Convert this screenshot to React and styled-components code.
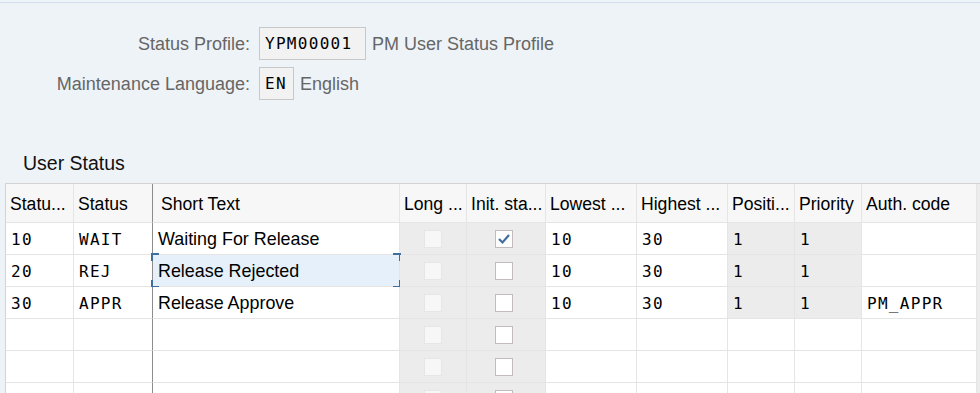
import React from 'react';
import styled, { createGlobalStyle } from 'styled-components';

const GlobalStyle = createGlobalStyle`
  html, body {
    margin: 0;
    padding: 0;
    background: #eef3f8;
    overflow: hidden;
  }
  body {
    font-family: "Liberation Sans", Arial, sans-serif;
  }
`;

const Page = styled.div`
  margin-top: 2px;
  border-top: 1px solid #d3dfed;
  height: 390px;
  background: #eef3f8;
`;

const Form = styled.div`
  display: grid;
  grid-template-columns: 250px auto;
  column-gap: 9px;
  row-gap: 7px;
  padding-top: 24px;
  align-items: center;
`;

const Label = styled.div`
  justify-self: end;
  color: #666;
  font-size: 18px;
  padding-top: 1px;
`;

const Field = styled.div`
  display: flex;
  align-items: center;
  gap: 6px;
`;

const Input = styled.div`
  box-sizing: border-box;
  width: ${({ $w }) => $w}px;
  height: 33px;
  padding-left: 5px;
  display: flex;
  align-items: center;
  background: #f2f2f2;
  border: 1px solid #c8c8c8;
  color: #000;
  font-family: "DejaVu Sans Mono", "Liberation Mono", monospace;
  font-size: 16px;
  letter-spacing: 1.3px;
`;

const Desc = styled.span`
  color: #666;
  font-size: 18px;
  padding-top: 1px;
`;

const Title = styled.h2`
  margin: 51px 0 0 23px;
  font-size: 19.5px;
  font-weight: normal;
  color: #111;
  line-height: 24px;
`;

const TableWrap = styled.div`
  display: flex;
  margin: 8px 0 0 5px;
`;

const Table = styled.div`
  display: grid;
  grid-template-columns: 68px 79px 247px 67px 79px 91px 91px 67px 67px 115px;
  border-left: 1px solid #cfd4da;
  border-top: 1px solid #d2d2d2;
  background: #fff;
`;

const Strip = styled.div`
  width: 4px;
  background: #ececec;
  border-top: 1px solid #d2d2d2;
`;

const HeadCell = styled.div`
  box-sizing: border-box;
  height: 39px;
  display: flex;
  align-items: center;
  padding-left: ${({ $pad }) => $pad ?? 4}px;
  padding-top: 2px;
  background: #f7f7f7;
  border-right: 1px solid ${({ $fixed }) => ($fixed ? '#8c8c8c' : '#e5e5e5')};
  border-bottom: 1px solid #e5e5e5;
  font-size: 17.6px;
  color: #000;
  white-space: nowrap;
  overflow: hidden;
`;

const Cell = styled.div`
  position: relative;
  box-sizing: border-box;
  height: 32px;
  display: flex;
  align-items: center;
  justify-content: ${({ $center }) => ($center ? 'center' : 'flex-start')};
  padding-left: ${({ $center }) => ($center ? 0 : 5)}px;
  padding-top: 1px;
  background: ${({ $bg }) => $bg || '#fff'};
  border-right: 1px solid ${({ $fixed }) => ($fixed ? '#8c8c8c' : '#e5e5e5')};
  border-bottom: 1px solid #e5e5e5;
  color: #000;
  white-space: nowrap;
  font-family: ${({ $mono }) =>
    $mono ? '"DejaVu Sans Mono", "Liberation Mono", monospace' : '"Liberation Sans", Arial, sans-serif'};
  font-size: ${({ $mono }) => ($mono ? '16px' : '17.9px')};
  letter-spacing: ${({ $mono }) => ($mono ? '1.3px' : 'normal')};
`;

const Check = styled.div`
  box-sizing: border-box;
  width: 18px;
  height: 18px;
  margin-left: ${({ $dx }) => $dx || 0}px;
  background: ${({ $disabled }) => ($disabled ? '#f7f7f7' : '#fff')};
  border: 1px solid ${({ $disabled }) => ($disabled ? '#e6e6e6' : '#c4bcbc')};
  display: flex;
  align-items: center;
  justify-content: center;
`;

const Corner = styled.span`
  position: absolute;
  width: 6px;
  height: 6px;
  border-color: #3f6f9f;
  border-style: solid;
  border-width: 0;
  ${({ $v }) => ($v === 'top' ? 'top: -2px; border-top-width: 2px;' : 'bottom: -2px; border-bottom-width: 2px;')}
  ${({ $h }) => ($h === 'left' ? 'left: -2px; border-left-width: 2px;' : 'right: -2px; border-right-width: 2px;')}
`;

const columns = [
  { head: 'Statu...', mono: true },
  { head: 'Status', mono: true, fixed: true },
  { head: 'Short Text', pad: 8 },
  { head: 'Long ...', check: 'disabled', gray: true },
  { head: 'Init. sta...', check: 'enabled', gray: true },
  { head: 'Lowest ...', mono: true },
  { head: 'Highest ...', mono: true },
  { head: 'Positi...', mono: true, grayFilled: true },
  { head: 'Priority', mono: true, grayFilled: true },
  { head: 'Auth. code', mono: true },
];

const rows = [
  ['10', 'WAIT', 'Waiting For Release', false, true, '10', '30', '1', '1', ''],
  ['20', 'REJ', 'Release Rejected', false, false, '10', '30', '1', '1', ''],
  ['30', 'APPR', 'Release Approve', false, false, '10', '30', '1', '1', 'PM_APPR'],
  null,
  null,
  null,
];

const CheckMark = () => (
  <svg width="16" height="16" viewBox="0 0 16 16">
    <polyline points="3,8 6.5,11.5 13,4" fill="none" stroke="#3f6f9f" strokeWidth="2.2" />
  </svg>
);

const FocusFrame = () => (
  <>
    <Corner $v="top" $h="left" />
    <Corner $v="top" $h="right" />
    <Corner $v="bottom" $h="left" />
    <Corner $v="bottom" $h="right" />
  </>
);

export default function App() {
  return (
    <>
      <GlobalStyle />
      <Page>
        <Form>
          <Label>Status Profile:</Label>
          <Field>
            <Input $w={107}>YPM00001</Input>
            <Desc>PM User Status Profile</Desc>
          </Field>
          <Label>Maintenance Language:</Label>
          <Field>
            <Input $w={35}>EN</Input>
            <Desc>English</Desc>
          </Field>
        </Form>

        <Title>User Status</Title>

        <TableWrap>
          <Table>
            {columns.map((c) => (
              <HeadCell key={c.head} $fixed={c.fixed} $pad={c.pad}>
                {c.head}
              </HeadCell>
            ))}
            {rows.map((row, r) =>
              columns.map((c, i) => {
                const value = row ? row[i] : '';
                const bg = c.gray || (c.grayFilled && row) ? '#ececec' : '#fff';
                const focused = r === 1 && i === 2;
                if (c.check) {
                  return (
                    <Cell key={`${r}-${i}`} $center $bg={bg}>
                      <Check $disabled={c.check === 'disabled'} $dx={c.check === 'disabled' ? -1 : -4}>
                        {value === true && <CheckMark />}
                      </Check>
                    </Cell>
                  );
                }
                return (
                  <Cell
                    key={`${r}-${i}`}
                    $mono={c.mono}
                    $fixed={c.fixed}
                    $bg={focused ? '#e5f0fa' : bg}
                  >
                    {value}
                    {focused && <FocusFrame />}
                  </Cell>
                );
              })
            )}
          </Table>
          <Strip />
        </TableWrap>
      </Page>
    </>
  );
}
